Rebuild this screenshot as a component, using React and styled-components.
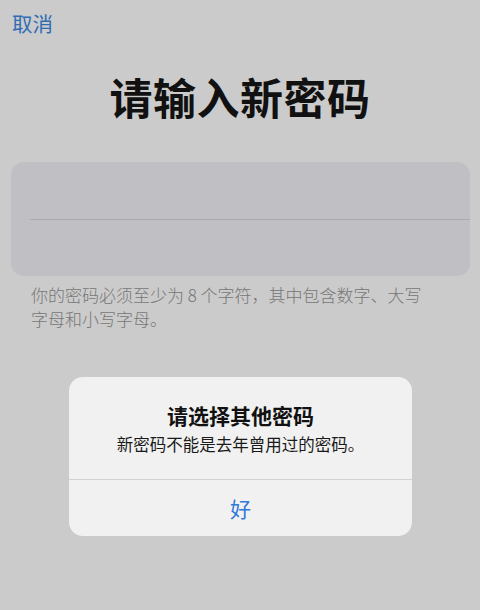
import styled, { createGlobalStyle } from "styled-components";

const Global = createGlobalStyle`
  html, body {
    margin: 0;
    padding: 0;
    background: #cbcbcb;
    font-family: "Noto Sans CJK SC", "Noto Sans", sans-serif;
  }
`;

const Screen = styled.div`
  position: relative;
  width: 480px;
  height: 610px;
  background: #cbcbcb;
  overflow: hidden;
`;

const NavBar = styled.div`
  display: flex;
  padding: 6px 12px 0;
  height: 34px;
  align-items: center;
`;

const Cancel = styled.span`
  font-size: 20.5px;
  color: #2f6db5;
  line-height: 1;
`;

const Title = styled.h1`
  margin: 28px 0 0;
  text-align: center;
  font-size: 43px;
  font-weight: 700;
  color: #111;
  line-height: 56px;
  letter-spacing: 0.5px;
`;

const Fields = styled.div`
  margin: 38px 10px 0 11px;
  height: 114px;
  border-radius: 13px;
  background: #c0bfc4;
  display: flex;
  flex-direction: column;
`;

const Field = styled.div`
  flex: 1;
  border-top: ${(p) => (p.first ? "none" : "1px solid #abaaae")};
  margin-left: ${(p) => (p.first ? "0" : "19px")};
`;

const Help = styled.div`
  margin: 7px 0 0 31px;
  display: flex;
  flex-direction: column;
  font-size: 17px;
  font-weight: 300;
  color: #777;
`;

const HelpLine = styled.span`
  line-height: 24px;
  white-space: nowrap;
`;

const Overlay = styled.div`
  position: absolute;
  left: 69px;
  top: 377px;
  width: 343px;
  border-radius: 14px;
  background: #f1f1f1;
  overflow: hidden;
`;

const AlertBody = styled.div`
  padding: 23px 16px 23px;
  display: flex;
  flex-direction: column;
  align-items: center;
  gap: 2px;
`;

const AlertTitle = styled.div`
  font-size: 21px;
  font-weight: 700;
  color: #111;
  line-height: 30px;
`;

const AlertMsg = styled.div`
  font-size: 16.5px;
  color: #1a1a1a;
  line-height: 24px;
`;

const AlertButton = styled.div`
  border-top: 1px solid #d2d2d2;
  height: 56px;
  display: flex;
  align-items: center;
  justify-content: center;
  font-size: 21px;
  color: #2f7ad9;
`;

export default function App() {
  return (
    <Screen>
      <Global />
      <NavBar>
        <Cancel>取消</Cancel>
      </NavBar>
      <Title>请输入新密码</Title>
      <Fields>
        <Field first />
        <Field />
      </Fields>
      <Help>
        <HelpLine>你的密码必须至少为 8 个字符，其中包含数字、大写</HelpLine>
        <HelpLine>字母和小写字母。</HelpLine>
      </Help>
      <Overlay>
        <AlertBody>
          <AlertTitle>请选择其他密码</AlertTitle>
          <AlertMsg>新密码不能是去年曾用过的密码。</AlertMsg>
        </AlertBody>
        <AlertButton>好</AlertButton>
      </Overlay>
    </Screen>
  );
}
